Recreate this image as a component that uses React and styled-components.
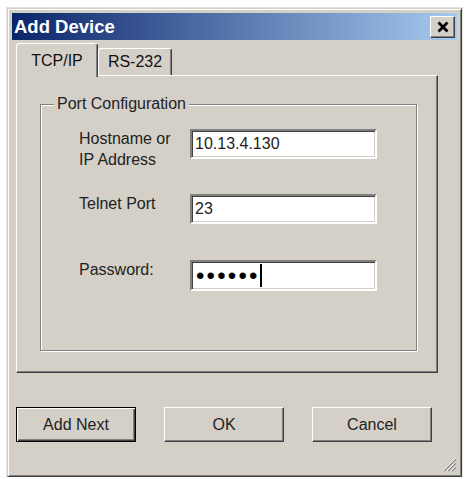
import React from "react";
import styled, { createGlobalStyle } from "styled-components";

const GlobalStyle = createGlobalStyle`
  body {
    margin: 0;
    background: #fff;
    font-family: "Liberation Sans", Arial, sans-serif;
  }
`;

const Window = styled.div`
  box-sizing: border-box;
  width: 455px;
  height: 469px;
  margin: 8px 0 0 7px;
  padding: 4px;
  display: flex;
  flex-direction: column;
  background: #d4d0c8;
  border: 1px solid;
  border-color: #d4d0c8 #404040 #404040 #d4d0c8;
  box-shadow: inset 1px 1px #fff, inset -1px -1px #808080;
  outline: 1px solid #e4e2dc;
`;

const TitleBar = styled.div`
  height: 27px;
  flex: none;
  display: flex;
  align-items: center;
  justify-content: space-between;
  padding-left: 2px;
  background: linear-gradient(to right, #0a246a, #a6caf0);
  color: #fff;
  font-size: 18.5px;
  font-weight: bold;
`;

const CloseButton = styled.button`
  box-sizing: border-box;
  width: 25px;
  height: 22px;
  margin-right: 2px;
  padding: 0;
  display: flex;
  align-items: center;
  justify-content: center;
  background: #d4d0c8;
  border: 1px solid;
  border-color: #fff #404040 #404040 #fff;
  box-shadow: inset -1px -1px #808080;
`;

const TabStrip = styled.div`
  display: flex;
  align-items: flex-end;
  height: 34px;
  margin: 3px 0 -2px 4px;
  position: relative;
  z-index: 1;
`;

const Tab = styled.div`
  box-sizing: border-box;
  width: ${p => p.$width}px;
  height: ${p => (p.$active ? 34 : 27)}px;
  margin-bottom: ${p => (p.$active ? 0 : 2)}px;
  padding-top: ${p => (p.$active ? 8 : 4)}px;
  text-align: center;
  font-size: 16px;
  color: #111;
  background: #d4d0c8;
  border: 1px solid;
  border-bottom: none;
  border-color: #fff #404040 transparent #fff;
  border-radius: 3px 3px 0 0;
  box-shadow: inset -1px 0 #808080;
`;

const Panel = styled.div`
  box-sizing: border-box;
  width: 422px;
  height: 298px;
  margin-left: 4px;
  padding: 19px 20px 0 23px;
  border: 1px solid;
  border-color: #fff #404040 #404040 #fff;
  box-shadow: inset -1px -1px #808080;
`;

const Group = styled.fieldset`
  box-sizing: border-box;
  height: 256px;
  margin: 0;
  padding: 16px 0 0 38px;
  border: 1px solid #808080;
  box-shadow: 1px 1px 0 #fff, inset 1px 1px 0 #fff;
`;

const Legend = styled.legend`
  margin-left: -25px;
  padding: 0 3px;
  background: #d4d0c8;
  font-size: 16px;
  line-height: 18px;
  color: #222;
`;

const Form = styled.div`
  display: grid;
  grid-template-columns: 111px 187px;
  grid-template-rows: 65px 66px 31px;
  align-items: start;
`;

const Label = styled.label`
  font-size: 16px;
  line-height: ${p => (p.$tight ? 21 : 20)}px;
  margin-top: ${p => (p.$tight ? -1 : 0)}px;
  color: #222;
`;

const boxLook = `
  box-sizing: border-box;
  width: 187px;
  border: 2px solid;
  border-color: #808080 #fff #fff #808080;
  box-shadow: inset 1px 1px #404040, inset -1px -1px #d4d0c8;
  background: #fff;
  font-family: "Liberation Sans", Arial, sans-serif;
  font-size: 16px;
  color: #222;
  padding: 0 3px;
  outline: none;
`;

const TextBox = styled.input`
  ${boxLook}
  height: 30px;
`;

const PasswordBox = styled.div`
  ${boxLook}
  height: 31px;
  display: flex;
  align-items: center;
  padding-left: 4px;
  font-size: 24px;
  letter-spacing: 2.2px;
  color: #000;
`;

const Caret = styled.span`
  display: inline-block;
  width: 2px;
  height: 23px;
  margin-left: 0;
  background: #000;
`;

const ButtonRow = styled.div`
  display: flex;
  gap: 28px;
  margin: 34px 0 0 4px;
`;

const Button = styled.button`
  box-sizing: border-box;
  width: 120px;
  height: 35px;
  padding: 0;
  font-family: "Liberation Sans", Arial, sans-serif;
  font-size: 16px;
  color: #222;
  background: #d4d0c8;
  border: 1px solid;
  border-color: ${p => (p.$default ? "#000" : "#fff #404040 #404040 #fff")};
  box-shadow: ${p =>
    p.$default
      ? "inset 1px 1px #fff, inset -1px -1px #404040, inset -2px -2px #808080"
      : "inset -1px -1px #808080"};
`;

const Grip = styled.svg`
  align-self: flex-end;
  margin-top: auto;
  flex: none;
`;

export default function App() {
  return (
    <>
      <GlobalStyle />
      <Window>
        <TitleBar>
          <span>Add Device</span>
          <CloseButton aria-label="Close">
            <svg width="14" height="12" viewBox="0 0 14 12">
              <path d="M2.5 1.5 L11.5 10.5 M11.5 1.5 L2.5 10.5" stroke="#000" strokeWidth="2.8" />
            </svg>
          </CloseButton>
        </TitleBar>

        <TabStrip>
          <Tab $active $width={82}>TCP/IP</Tab>
          <Tab $width={74}>RS-232</Tab>
        </TabStrip>

        <Panel>
          <Group>
            <Legend>Port Configuration</Legend>
            <Form>
              <Label $tight>
                Hostname or
                <br />
                IP Address
              </Label>
              <TextBox readOnly value="10.13.4.130" />
              <Label>Telnet Port</Label>
              <TextBox readOnly value="23" />
              <Label>Password:</Label>
              <PasswordBox>
                ••••••
                <Caret />
              </PasswordBox>
            </Form>
          </Group>
        </Panel>

        <ButtonRow>
          <Button $default>Add Next</Button>
          <Button>OK</Button>
          <Button>Cancel</Button>
        </ButtonRow>

        <Grip width="16" height="16" viewBox="0 0 16 16">
          <path d="M15 3 L3 15 M15 7 L7 15 M15 11 L11 15" stroke="#808080" strokeWidth="1.4" />
          <path d="M15 2 L2 15 M15 6 L6 15 M15 10 L10 15" stroke="#fff" strokeWidth="0.8" />
        </Grip>
      </Window>
    </>
  );
}
